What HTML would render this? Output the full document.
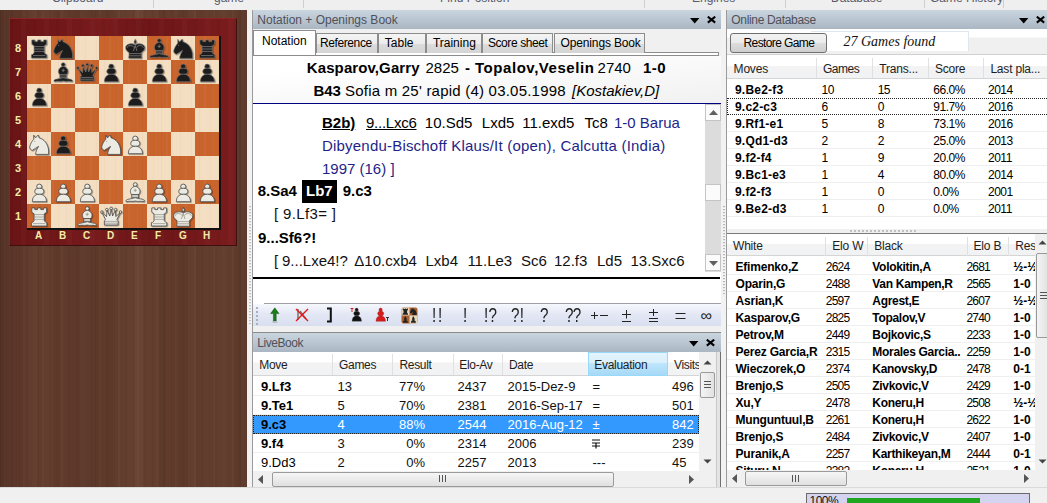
<!DOCTYPE html><html><head><meta charset='utf-8'><style>
*{margin:0;padding:0;box-sizing:border-box}
html,body{width:1047px;height:503px;overflow:hidden;background:#f0f0f0;font-family:"Liberation Sans", sans-serif;}
.a{position:absolute}
.t{position:absolute;white-space:pre;line-height:1}
.tb{position:absolute;background:linear-gradient(#c9d5df,#bac6d1 50%,#aab7c3);}
.ttl{position:absolute;font-size:12px;color:#4d4d55;white-space:pre;line-height:1}
</style></head><body>
<div class='a' style='left:0;top:0;width:1047px;height:10px;background:#efefef'></div>
<div class='a' style='left:153px;top:0;width:1px;height:8px;background:#cfcfcf'></div>
<div class='a' style='left:303px;top:0;width:1px;height:8px;background:#cfcfcf'></div>
<div class='a' style='left:644px;top:0;width:1px;height:8px;background:#cfcfcf'></div>
<div class='a' style='left:785px;top:0;width:1px;height:8px;background:#cfcfcf'></div>
<div class='a' style='left:924px;top:0;width:1px;height:8px;background:#cfcfcf'></div>
<div class='a' style='left:1003px;top:0;width:1px;height:8px;background:#cfcfcf'></div>
<div class='t' style='left:52px;top:-8.2px;font-size:12px;color:#5a5a6a'>Clipboard</div>
<div class='t' style='left:214px;top:-8.2px;font-size:12px;color:#5a5a6a'>game</div>
<div class='t' style='left:440px;top:-8.2px;font-size:12px;color:#5a5a6a'>Find Position</div>
<div class='t' style='left:692px;top:-8.2px;font-size:12px;color:#5a5a6a'>Engines</div>
<div class='t' style='left:831px;top:-8.2px;font-size:12px;color:#5a5a6a'>Database</div>
<div class='t' style='left:930px;top:-8.2px;font-size:12px;color:#5a5a6a'>Game History</div>
<div class='a' style='left:0;top:10px;width:247px;height:477px;background:repeating-linear-gradient(90deg,rgba(0,0,0,.05) 0 1px,transparent 1px 4px,rgba(255,255,255,.025) 4px 6px,transparent 6px 11px,rgba(0,0,0,.04) 11px 13px,transparent 13px 19px),repeating-linear-gradient(90deg,rgba(0,0,0,.045) 0 7px,transparent 7px 29px,rgba(255,255,255,.025) 29px 37px,transparent 37px 53px),linear-gradient(90deg,#583427,#643d2e 20%,#5b3729 35%,#66402f 55%,#5e392a 75%,#65402f 90%,#5a3628);'></div>
<div class='a' style='left:9px;top:18px;width:228px;height:228px;background:repeating-linear-gradient(90deg,rgba(0,0,0,.04) 0 3px,transparent 3px 11px,rgba(255,255,255,.02) 11px 16px,transparent 16px 23px),linear-gradient(90deg,#6a1416,#781b1d 40%,#6e1618 60%,#7a1c1e);border:1px solid #8c2424;border-right-color:#3e1010;border-bottom-color:#3e1010'></div>
<svg class='a' style='left:27px;top:36px' width='194' height='194' viewBox='0 0 194 194'><defs>
<symbol id='P' viewBox='0 0 24 24'><ellipse cx='12.2' cy='6.5' rx='2.5' ry='2.4'/><ellipse cx='12.3' cy='11.3' rx='4.5' ry='3.1'/><path d='M5.4,21.7 C5.2,17.2 8,14.2 12.3,14.2 C16.6,14.2 19.5,17.2 19.5,21.7 Z'/></symbol>
<symbol id='R' viewBox='0 0 24 24'><path d='M4.8,3.9 H7.8 V5.6 H10.6 V3.9 H13.8 V5.6 H16.6 V3.9 H19.6 V8.2 L17.3,9.8 V16.8 L19,18.6 H19.8 V22 H4.4 V18.6 H5.4 L7.1,16.8 V9.8 L4.8,8.2 Z'/></symbol>
<symbol id='N' viewBox='0 0 24 24'><path d='M6.7,3.2 L8.5,5.9 L11.2,3 L12.2,5.9 C16.8,7 20.8,11.5 21.6,18 L21.6,22.4 H8.6 C8.6,20 9.8,17.4 11.6,14.4 C9.6,15.5 7.5,17 5.4,18.3 C4,18.1 2.5,16.6 2.7,14.8 C3.3,12 5,9 6.8,7.2 Z'/></symbol>
<symbol id='B' viewBox='0 0 24 24'><circle cx='12.2' cy='4.6' r='1.9'/><path d='M12.2,6.2 C7.6,7.4 6.6,11 8,13.6 L9,14.6 H15.4 L16.4,13.6 C17.8,11 16.8,7.4 12.2,6.2 Z'/><rect x='8.8' y='14.4' width='6.8' height='3.4'/><path d='M2.8,20.6 C4.8,18.4 9,19.2 12.2,17.6 C15.4,19.2 19.6,18.4 21.6,20.6 L21,21.8 C18.2,20.6 15,22 12.2,21 C9.4,22 6.2,20.6 3.4,21.8 Z'/></symbol>
<symbol id='Q' viewBox='0 0 24 24'><path d='M3,8.4 L6.6,15.6 L5.4,16.8 V21 H19 V16.8 L17.8,15.6 L21.4,8.4 L16.8,12.6 L16.4,6.4 L13.6,12 L12.2,5.4 L10.8,12 L8,6.4 L7.6,12.6 Z'/><circle cx='2.9' cy='8' r='1.25'/><circle cx='7.8' cy='5.6' r='1.25'/><circle cx='12.2' cy='4.4' r='1.25'/><circle cx='16.6' cy='5.6' r='1.25'/><circle cx='21.5' cy='8' r='1.25'/></symbol>
<symbol id='K' viewBox='0 0 24 24'><path d='M11.4,7.6 L11.2,5.6 L12.2,3.2 L13.2,5.6 L13,7.6 Z'/><path d='M12.2,9.2 C10.8,7 2.6,7 2.6,11.8 C2.6,14.2 5,15.8 6,16.6 V19.6 L5.8,20.2 V22.2 H18.6 V20.2 L18.4,19.6 V16.6 C19.4,15.8 21.8,14.2 21.8,11.8 C21.8,7 13.6,7 12.2,9.2 Z'/></symbol>
</defs><rect x='0' y='0' width='24' height='24' fill='#f4dec2'/><rect x='24' y='0' width='24' height='24' fill='#c8642c'/><rect x='48' y='0' width='24' height='24' fill='#f4dec2'/><rect x='72' y='0' width='24' height='24' fill='#c8642c'/><rect x='96' y='0' width='24' height='24' fill='#f4dec2'/><rect x='120' y='0' width='24' height='24' fill='#c8642c'/><rect x='144' y='0' width='24' height='24' fill='#f4dec2'/><rect x='168' y='0' width='24' height='24' fill='#c8642c'/><rect x='0' y='24' width='24' height='24' fill='#c8642c'/><rect x='24' y='24' width='24' height='24' fill='#f4dec2'/><rect x='48' y='24' width='24' height='24' fill='#c8642c'/><rect x='72' y='24' width='24' height='24' fill='#f4dec2'/><rect x='96' y='24' width='24' height='24' fill='#c8642c'/><rect x='120' y='24' width='24' height='24' fill='#f4dec2'/><rect x='144' y='24' width='24' height='24' fill='#c8642c'/><rect x='168' y='24' width='24' height='24' fill='#f4dec2'/><rect x='0' y='48' width='24' height='24' fill='#f4dec2'/><rect x='24' y='48' width='24' height='24' fill='#c8642c'/><rect x='48' y='48' width='24' height='24' fill='#f4dec2'/><rect x='72' y='48' width='24' height='24' fill='#c8642c'/><rect x='96' y='48' width='24' height='24' fill='#f4dec2'/><rect x='120' y='48' width='24' height='24' fill='#c8642c'/><rect x='144' y='48' width='24' height='24' fill='#f4dec2'/><rect x='168' y='48' width='24' height='24' fill='#c8642c'/><rect x='0' y='72' width='24' height='24' fill='#c8642c'/><rect x='24' y='72' width='24' height='24' fill='#f4dec2'/><rect x='48' y='72' width='24' height='24' fill='#c8642c'/><rect x='72' y='72' width='24' height='24' fill='#f4dec2'/><rect x='96' y='72' width='24' height='24' fill='#c8642c'/><rect x='120' y='72' width='24' height='24' fill='#f4dec2'/><rect x='144' y='72' width='24' height='24' fill='#c8642c'/><rect x='168' y='72' width='24' height='24' fill='#f4dec2'/><rect x='0' y='96' width='24' height='24' fill='#f4dec2'/><rect x='24' y='96' width='24' height='24' fill='#c8642c'/><rect x='48' y='96' width='24' height='24' fill='#f4dec2'/><rect x='72' y='96' width='24' height='24' fill='#c8642c'/><rect x='96' y='96' width='24' height='24' fill='#f4dec2'/><rect x='120' y='96' width='24' height='24' fill='#c8642c'/><rect x='144' y='96' width='24' height='24' fill='#f4dec2'/><rect x='168' y='96' width='24' height='24' fill='#c8642c'/><rect x='0' y='120' width='24' height='24' fill='#c8642c'/><rect x='24' y='120' width='24' height='24' fill='#f4dec2'/><rect x='48' y='120' width='24' height='24' fill='#c8642c'/><rect x='72' y='120' width='24' height='24' fill='#f4dec2'/><rect x='96' y='120' width='24' height='24' fill='#c8642c'/><rect x='120' y='120' width='24' height='24' fill='#f4dec2'/><rect x='144' y='120' width='24' height='24' fill='#c8642c'/><rect x='168' y='120' width='24' height='24' fill='#f4dec2'/><rect x='0' y='144' width='24' height='24' fill='#f4dec2'/><rect x='24' y='144' width='24' height='24' fill='#c8642c'/><rect x='48' y='144' width='24' height='24' fill='#f4dec2'/><rect x='72' y='144' width='24' height='24' fill='#c8642c'/><rect x='96' y='144' width='24' height='24' fill='#f4dec2'/><rect x='120' y='144' width='24' height='24' fill='#c8642c'/><rect x='144' y='144' width='24' height='24' fill='#f4dec2'/><rect x='168' y='144' width='24' height='24' fill='#c8642c'/><rect x='0' y='168' width='24' height='24' fill='#c8642c'/><rect x='24' y='168' width='24' height='24' fill='#f4dec2'/><rect x='48' y='168' width='24' height='24' fill='#c8642c'/><rect x='72' y='168' width='24' height='24' fill='#f4dec2'/><rect x='96' y='168' width='24' height='24' fill='#c8642c'/><rect x='120' y='168' width='24' height='24' fill='#f4dec2'/><rect x='144' y='168' width='24' height='24' fill='#c8642c'/><rect x='168' y='168' width='24' height='24' fill='#f4dec2'/><defs><pattern id='gr' width='19' height='24' patternUnits='userSpaceOnUse'><rect x='1' width='1' height='24' fill='rgba(120,50,20,.035)'/><rect x='6' width='2' height='24' fill='rgba(255,255,255,.03)'/><rect x='12' width='1' height='24' fill='rgba(120,50,20,.03)'/><rect x='15' width='1' height='24' fill='rgba(255,255,255,.02)'/></pattern><filter id='sh' x='-20%' y='-20%' width='150%' height='150%'><feDropShadow dx='0.7' dy='0.7' stdDeviation='0.5' flood-color='#000' flood-opacity='0.45'/></filter></defs><rect width='192' height='192' fill='url(#gr)'/><path d='M0,193 H193 V0' fill='none' stroke='#111' stroke-width='2'/><use href='#R' x='0' y='0' width='24' height='24' fill='#1e1e1e' stroke='#7a7a7a' stroke-width='0.6' filter='url(#sh)'/><path transform='translate(0,0)' d='M7.4,10.6 H17 M7.4,13 H17 M7.4,15.4 H17 M6,19.6 H18.4' stroke='#8a8a8a' stroke-width='0.7' fill='none'/><use href='#N' x='24' y='0' width='24' height='24' fill='#1e1e1e' stroke='#7a7a7a' stroke-width='0.6' filter='url(#sh)'/><path transform='translate(24,0)' d='M7.2,9.4 L8.2,9.4' stroke='#8a8a8a' stroke-width='0.7' fill='none'/><use href='#K' x='96' y='0' width='24' height='24' fill='#1e1e1e' stroke='#7a7a7a' stroke-width='0.6' filter='url(#sh)'/><path transform='translate(96,0)' d='M6.4,17.6 H18 M6.2,19.8 H18.2 M12.2,9.6 L10.4,15 M12.2,9.6 L14,15 M4.2,11.8 C4.2,9 9.6,8.6 11.2,11.6 M20.2,11.8 C20.2,9 14.8,8.6 13.2,11.6' stroke='#8a8a8a' stroke-width='0.7' fill='none'/><use href='#B' x='120' y='0' width='24' height='24' fill='#1e1e1e' stroke='#7a7a7a' stroke-width='0.6' filter='url(#sh)'/><path transform='translate(120,0)' d='M9,16 H15.4 M12.2,8.6 V12 M10.6,10.3 H13.8' stroke='#8a8a8a' stroke-width='0.7' fill='none'/><use href='#N' x='144' y='0' width='24' height='24' fill='#1e1e1e' stroke='#7a7a7a' stroke-width='0.6' filter='url(#sh)'/><path transform='translate(144,0)' d='M7.2,9.4 L8.2,9.4' stroke='#8a8a8a' stroke-width='0.7' fill='none'/><use href='#R' x='168' y='0' width='24' height='24' fill='#1e1e1e' stroke='#7a7a7a' stroke-width='0.6' filter='url(#sh)'/><path transform='translate(168,0)' d='M7.4,10.6 H17 M7.4,13 H17 M7.4,15.4 H17 M6,19.6 H18.4' stroke='#8a8a8a' stroke-width='0.7' fill='none'/><use href='#B' x='24' y='24' width='24' height='24' fill='#1e1e1e' stroke='#7a7a7a' stroke-width='0.6' filter='url(#sh)'/><path transform='translate(24,24)' d='M9,16 H15.4 M12.2,8.6 V12 M10.6,10.3 H13.8' stroke='#8a8a8a' stroke-width='0.7' fill='none'/><use href='#Q' x='48' y='24' width='24' height='24' fill='#1e1e1e' stroke='#7a7a7a' stroke-width='0.6' filter='url(#sh)'/><path transform='translate(48,24)' d='M6,17.4 H18.4 M6,19.2 H18.4' stroke='#8a8a8a' stroke-width='0.7' fill='none'/><use href='#P' x='72' y='24' width='24' height='24' fill='#1e1e1e' stroke='#7a7a7a' stroke-width='0.6' filter='url(#sh)'/><use href='#P' x='120' y='24' width='24' height='24' fill='#1e1e1e' stroke='#7a7a7a' stroke-width='0.6' filter='url(#sh)'/><use href='#P' x='144' y='24' width='24' height='24' fill='#1e1e1e' stroke='#7a7a7a' stroke-width='0.6' filter='url(#sh)'/><use href='#P' x='168' y='24' width='24' height='24' fill='#1e1e1e' stroke='#7a7a7a' stroke-width='0.6' filter='url(#sh)'/><use href='#P' x='0' y='48' width='24' height='24' fill='#1e1e1e' stroke='#7a7a7a' stroke-width='0.6' filter='url(#sh)'/><use href='#P' x='96' y='48' width='24' height='24' fill='#1e1e1e' stroke='#7a7a7a' stroke-width='0.6' filter='url(#sh)'/><use href='#N' x='0' y='96' width='24' height='24' fill='#ecebe3' stroke='#4a4a4a' stroke-width='0.8' filter='url(#sh)'/><path transform='translate(0,96)' d='M7.2,9.4 L8.2,9.4' stroke='#8c8c84' stroke-width='0.7' fill='none'/><use href='#P' x='24' y='96' width='24' height='24' fill='#1e1e1e' stroke='#7a7a7a' stroke-width='0.6' filter='url(#sh)'/><use href='#N' x='72' y='96' width='24' height='24' fill='#ecebe3' stroke='#4a4a4a' stroke-width='0.8' filter='url(#sh)'/><path transform='translate(72,96)' d='M7.2,9.4 L8.2,9.4' stroke='#8c8c84' stroke-width='0.7' fill='none'/><use href='#P' x='96' y='96' width='24' height='24' fill='#ecebe3' stroke='#4a4a4a' stroke-width='0.8' filter='url(#sh)'/><use href='#P' x='0' y='144' width='24' height='24' fill='#ecebe3' stroke='#4a4a4a' stroke-width='0.8' filter='url(#sh)'/><use href='#P' x='24' y='144' width='24' height='24' fill='#ecebe3' stroke='#4a4a4a' stroke-width='0.8' filter='url(#sh)'/><use href='#P' x='48' y='144' width='24' height='24' fill='#ecebe3' stroke='#4a4a4a' stroke-width='0.8' filter='url(#sh)'/><use href='#B' x='96' y='144' width='24' height='24' fill='#ecebe3' stroke='#4a4a4a' stroke-width='0.8' filter='url(#sh)'/><path transform='translate(96,144)' d='M9,16 H15.4 M12.2,8.6 V12 M10.6,10.3 H13.8' stroke='#8c8c84' stroke-width='0.7' fill='none'/><use href='#P' x='120' y='144' width='24' height='24' fill='#ecebe3' stroke='#4a4a4a' stroke-width='0.8' filter='url(#sh)'/><use href='#P' x='144' y='144' width='24' height='24' fill='#ecebe3' stroke='#4a4a4a' stroke-width='0.8' filter='url(#sh)'/><use href='#P' x='168' y='144' width='24' height='24' fill='#ecebe3' stroke='#4a4a4a' stroke-width='0.8' filter='url(#sh)'/><use href='#R' x='0' y='168' width='24' height='24' fill='#ecebe3' stroke='#4a4a4a' stroke-width='0.8' filter='url(#sh)'/><path transform='translate(0,168)' d='M7.4,10.6 H17 M7.4,13 H17 M7.4,15.4 H17 M6,19.6 H18.4' stroke='#8c8c84' stroke-width='0.7' fill='none'/><use href='#B' x='48' y='168' width='24' height='24' fill='#ecebe3' stroke='#4a4a4a' stroke-width='0.8' filter='url(#sh)'/><path transform='translate(48,168)' d='M9,16 H15.4 M12.2,8.6 V12 M10.6,10.3 H13.8' stroke='#8c8c84' stroke-width='0.7' fill='none'/><use href='#Q' x='72' y='168' width='24' height='24' fill='#ecebe3' stroke='#4a4a4a' stroke-width='0.8' filter='url(#sh)'/><path transform='translate(72,168)' d='M6,17.4 H18.4 M6,19.2 H18.4' stroke='#8c8c84' stroke-width='0.7' fill='none'/><use href='#R' x='120' y='168' width='24' height='24' fill='#ecebe3' stroke='#4a4a4a' stroke-width='0.8' filter='url(#sh)'/><path transform='translate(120,168)' d='M7.4,10.6 H17 M7.4,13 H17 M7.4,15.4 H17 M6,19.6 H18.4' stroke='#8c8c84' stroke-width='0.7' fill='none'/><use href='#K' x='144' y='168' width='24' height='24' fill='#ecebe3' stroke='#4a4a4a' stroke-width='0.8' filter='url(#sh)'/><path transform='translate(144,168)' d='M6.4,17.6 H18 M6.2,19.8 H18.2 M12.2,9.6 L10.4,15 M12.2,9.6 L14,15 M4.2,11.8 C4.2,9 9.6,8.6 11.2,11.6 M20.2,11.8 C20.2,9 14.8,8.6 13.2,11.6' stroke='#8c8c84' stroke-width='0.7' fill='none'/></svg>
<div class='t' style='left:15px;top:43px;font-size:11px;font-weight:bold;color:#f4eca8'>8</div>
<div class='t' style='left:15px;top:67px;font-size:11px;font-weight:bold;color:#f4eca8'>7</div>
<div class='t' style='left:15px;top:91px;font-size:11px;font-weight:bold;color:#f4eca8'>6</div>
<div class='t' style='left:15px;top:115px;font-size:11px;font-weight:bold;color:#f4eca8'>5</div>
<div class='t' style='left:15px;top:139px;font-size:11px;font-weight:bold;color:#f4eca8'>4</div>
<div class='t' style='left:15px;top:163px;font-size:11px;font-weight:bold;color:#f4eca8'>3</div>
<div class='t' style='left:15px;top:187px;font-size:11px;font-weight:bold;color:#f4eca8'>2</div>
<div class='t' style='left:15px;top:211px;font-size:11px;font-weight:bold;color:#f4eca8'>1</div>
<div class='t' style='left:35px;top:231px;font-size:10px;font-weight:bold;color:#f4eca8'>A</div>
<div class='t' style='left:59px;top:231px;font-size:10px;font-weight:bold;color:#f4eca8'>B</div>
<div class='t' style='left:83px;top:231px;font-size:10px;font-weight:bold;color:#f4eca8'>C</div>
<div class='t' style='left:107px;top:231px;font-size:10px;font-weight:bold;color:#f4eca8'>D</div>
<div class='t' style='left:131px;top:231px;font-size:10px;font-weight:bold;color:#f4eca8'>E</div>
<div class='t' style='left:155px;top:231px;font-size:10px;font-weight:bold;color:#f4eca8'>F</div>
<div class='t' style='left:179px;top:231px;font-size:10px;font-weight:bold;color:#f4eca8'>G</div>
<div class='t' style='left:203px;top:231px;font-size:10px;font-weight:bold;color:#f4eca8'>H</div>
<div class='a' style='left:247px;top:10px;width:5px;height:477px;background:#f2f2f2'></div>
<div class='a' style='left:252px;top:10px;width:1px;height:477px;background:#9a9a9a'></div>
<div class='tb' style='left:253px;top:10px;width:469px;height:19px'></div>
<div class='t' style='left:257.3px;top:13.64px;font-size:12px;color:#4f5059;font-weight:normal;letter-spacing:0px'>Notation + Openings Book</div>
<svg class='a' style='left:689.7px;top:17.6px' width='10' height='6'><path d='M0,0 H9.4 L4.7,5.4 Z' fill='#000'/></svg>
<svg class='a' style='left:706.5px;top:15.8px' width='9' height='8'><path d='M0.8,0.6 L8.2,6.6 M8.2,0.6 L0.8,6.6' stroke='#000' stroke-width='2'/></svg>
<div class='a' style='left:253px;top:29px;width:469px;height:27px;background:#f0f0f0'></div>
<div class='a' style='left:253px;top:52px;width:466px;height:4px;background:#fff;border:1px solid #8c8c8c'></div>
<div class='a' style='left:316px;top:33px;width:62px;height:20px;border:1px solid #8c8c8c;border-bottom:none;background:linear-gradient(#f4f4f4,#ececec 50%,#dcdcdc 51%,#d4d4d4)'></div>
<div class='t' style='left:320px;top:36.84px;font-size:12px;color:#000;font-weight:normal;letter-spacing:-0.4px'>Reference</div>
<div class='a' style='left:378px;top:33px;width:48px;height:20px;border:1px solid #8c8c8c;border-bottom:none;background:linear-gradient(#f4f4f4,#ececec 50%,#dcdcdc 51%,#d4d4d4)'></div>
<div class='t' style='left:384.8px;top:36.84px;font-size:12px;color:#000;font-weight:normal;letter-spacing:0px'>Table</div>
<div class='a' style='left:426px;top:33px;width:56px;height:20px;border:1px solid #8c8c8c;border-bottom:none;background:linear-gradient(#f4f4f4,#ececec 50%,#dcdcdc 51%,#d4d4d4)'></div>
<div class='t' style='left:432.9px;top:36.84px;font-size:12px;color:#000;font-weight:normal;letter-spacing:0px'>Training</div>
<div class='a' style='left:482px;top:33px;width:71px;height:20px;border:1px solid #8c8c8c;border-bottom:none;background:linear-gradient(#f4f4f4,#ececec 50%,#dcdcdc 51%,#d4d4d4)'></div>
<div class='t' style='left:487.9px;top:36.84px;font-size:12px;color:#000;font-weight:normal;letter-spacing:-0.4px'>Score sheet</div>
<div class='a' style='left:554px;top:33px;width:91px;height:20px;border:1px solid #8c8c8c;border-bottom:none;background:linear-gradient(#f4f4f4,#ececec 50%,#dcdcdc 51%,#d4d4d4)'></div>
<div class='t' style='left:560.6px;top:36.84px;font-size:12px;color:#000;font-weight:normal;letter-spacing:-0.15px'>Openings Book</div>
<div class='a' style='left:253px;top:30px;width:63px;height:26px;border:1px solid #8c8c8c;border-bottom:none;background:#fff'></div>
<div class='t' style='left:262px;top:34.84px;font-size:12px;color:#000;font-weight:normal;'>Notation</div>
<div class='a' style='left:253px;top:56px;width:468px;height:276px;background:#fff'></div>
<div class='a' style='left:253px;top:56px;width:468px;height:47px;background:linear-gradient(175deg,#fff 20%,#f1f1f1)'></div>
<div class='a' style='left:253px;top:55px;width:466px;height:1px;background:#8c8c8c'></div>
<div class='t' style='left:306.8px;top:60.00px;font-size:15px;color:#000;font-weight:bold;letter-spacing:0.1px'>Kasparov,Garry</div>
<div class='t' style='left:425.5px;top:60.00px;font-size:15px;color:#000;font-weight:normal;'>2825</div>
<div class='t' style='left:465px;top:60.00px;font-size:15px;color:#000;font-weight:bold;'>-</div>
<div class='t' style='left:475px;top:60.00px;font-size:15px;color:#000;font-weight:bold;letter-spacing:0.55px'>Topalov,Veselin</div>
<div class='t' style='left:597.6px;top:60.00px;font-size:15px;color:#000;font-weight:normal;'>2740</div>
<div class='t' style='left:643px;top:60.00px;font-size:15px;color:#000;font-weight:bold;letter-spacing:0.5px'>1-0</div>
<div class='t' style='left:313.4px;top:82.70px;font-size:15px;color:#000;font-weight:bold;'>B43</div>
<div class='t' style='left:345px;top:82.70px;font-size:15px;color:#000;font-weight:normal;letter-spacing:0.22px'>Sofia m 25' rapid (4) 03.05.1998</div>
<div class='t' style='left:572px;top:82.70px;font-size:15px;color:#000;font-weight:normal;font-style:italic'>[Kostakiev,D]</div>
<div class='a' style='left:253px;top:103px;width:468px;height:1px;background:#000080'></div>
<div class='t' style='left:322px;top:115.00px;font-size:15px;color:#000;font-weight:bold;'><u>B2b)</u></div>
<div class='t' style='left:366px;top:115.00px;font-size:15px;color:#000;font-weight:normal;letter-spacing:-0.25px'><u>9...Lxc6</u></div>
<div class='t' style='left:424.8px;top:115.00px;font-size:15px;color:#000;font-weight:normal;'>10.Sd5</div>
<div class='t' style='left:481.8px;top:115.00px;font-size:15px;color:#000;font-weight:normal;'>Lxd5</div>
<div class='t' style='left:522.2px;top:115.00px;font-size:15px;color:#000;font-weight:normal;'>11.exd5</div>
<div class='t' style='left:584.4px;top:115.00px;font-size:15px;color:#000;font-weight:normal;'>Tc8</div>
<div class='t' style='left:614px;top:115.00px;font-size:15px;color:#1f1f88;font-weight:normal;'>1-0 Barua</div>
<div class='t' style='left:322px;top:137.60px;font-size:15px;color:#1f1f88;font-weight:normal;letter-spacing:0.2px'>Dibyendu-Bischoff Klaus/It (open), Calcutta (India)</div>
<div class='t' style='left:322px;top:161.30px;font-size:15px;color:#1f1f88;font-weight:normal;'>1997 (16) ]</div>
<div class='t' style='left:257.7px;top:183.00px;font-size:15px;color:#000;font-weight:bold;'>8.Sa4</div>
<div class='a' style='left:302px;top:180px;width:35px;height:23px;background:#000'></div>
<div class='t' style='left:306px;top:183.00px;font-size:15px;color:#fff;font-weight:bold;'>Lb7</div>
<div class='t' style='left:342.7px;top:183.00px;font-size:15px;color:#000;font-weight:bold;'>9.c3</div>
<div class='t' style='left:274px;top:205.50px;font-size:15px;color:#111;font-weight:normal;letter-spacing:0.35px'>[ 9.Lf3= ]</div>
<div class='t' style='left:258px;top:229.60px;font-size:15px;color:#000;font-weight:bold;'>9...Sf6?!</div>
<div class='t' style='left:274px;top:252.80px;font-size:15px;color:#111;font-weight:normal;'>[</div>
<div class='t' style='left:282px;top:252.80px;font-size:15px;color:#111;font-weight:normal;'>9...Lxe4!?</div>
<div class='t' style='left:354.3px;top:252.80px;font-size:15px;color:#111;font-weight:normal;'>Δ10.cxb4</div>
<div class='t' style='left:425.5px;top:252.80px;font-size:15px;color:#111;font-weight:normal;'>Lxb4</div>
<div class='t' style='left:467.4px;top:252.80px;font-size:15px;color:#111;font-weight:normal;'>11.Le3</div>
<div class='t' style='left:521px;top:252.80px;font-size:15px;color:#111;font-weight:normal;'>Sc6</div>
<div class='t' style='left:554px;top:252.80px;font-size:15px;color:#111;font-weight:normal;'>12.f3</div>
<div class='t' style='left:597px;top:252.80px;font-size:15px;color:#111;font-weight:normal;'>Ld5</div>
<div class='t' style='left:630.5px;top:252.80px;font-size:15px;color:#111;font-weight:normal;'>13.Sxc6</div>
<div class='a' style='left:705px;top:104px;width:16px;height:168px;background:#dcdcdc'></div>
<div class='a' style='left:705px;top:104px;width:16px;height:17px;background:#fbfbfb;border:1px solid #c4c4c4'></div>
<svg class='a' style='left:709px;top:110px' width='9' height='5'><path d='M0,5 L4.5,0 L9,5 Z' fill='#606060'/></svg>
<div class='a' style='left:705px;top:184px;width:16px;height:17px;background:#fbfbfb;border:1px solid #c4c4c4'></div>
<div class='a' style='left:705px;top:254px;width:16px;height:17px;background:#fbfbfb;border:1px solid #c4c4c4'></div>
<svg class='a' style='left:709px;top:261px' width='9' height='5'><path d='M0,0 L4.5,5 L9,0 Z' fill='#606060'/></svg>
<div class='a' style='left:253px;top:277px;width:467px;height:2px;background:#000'></div>
<div class='a' style='left:264px;top:303px;width:457px;height:1px;background:#a0a0a8'></div>
<div class='a' style='left:253px;top:304px;width:468px;height:23px;background:linear-gradient(#f6f8fd,#e4e8f5 45%,#d9dff0);border-bottom:1px solid #b8bfd2'></div>
<div class='a' style='left:253px;top:326px;width:468px;height:7px;background:#f0f0f0'></div>
<div class='a' style='left:253px;top:332px;width:468px;height:1px;background:#8a8a8a'></div>
<div class='a' style='left:256px;top:307px;width:2px;height:2px;background:#a8b0c4'></div>
<div class='a' style='left:256px;top:311px;width:2px;height:2px;background:#a8b0c4'></div>
<div class='a' style='left:256px;top:315px;width:2px;height:2px;background:#a8b0c4'></div>
<div class='a' style='left:256px;top:319px;width:2px;height:2px;background:#a8b0c4'></div>
<div class='a' style='left:256px;top:323px;width:2px;height:2px;background:#a8b0c4'></div>
<svg class='a' style='left:268px;top:306px' width='14' height='18'><path d='M6.8,1.8 L11,7.6 H8.2 V15 H5.4 V7.6 H2.6 Z' fill='#1a7a1a' stroke='#0e5a0e' stroke-width='0.5'/><ellipse cx='6.8' cy='16' rx='3' ry='0.8' fill='#b0b0b8'/></svg>
<svg class='a' style='left:294px;top:306px' width='16' height='18'><path d='M4,3 L4,14 M6,5 L12,13' stroke='#7a7a7a' stroke-width='1.6'/><path d='M2,3 L14,15 M14,3 L2,15' stroke='#e01818' stroke-width='1.4'/></svg>
<svg class='a' style='left:325px;top:306px' width='9' height='18'><path d='M2,2.5 H5.8 V15.5 H2' fill='none' stroke='#111' stroke-width='2'/></svg>
<svg class='a' style='left:349px;top:306px' width='14' height='18'><svg x='-0.5' y='-1' width='16' height='18' viewBox='0 0 24 24' preserveAspectRatio='none'><use href='#P' fill='#111' stroke='#555' stroke-width='0.5'/></svg><path d='M1.5,2.5 H4.5 M3,2.5 V6' stroke='#d02020' stroke-width='1'/></svg>
<svg class='a' style='left:375px;top:306px' width='16' height='18'><svg x='-2.5' y='-1' width='16' height='18' viewBox='0 0 24 24' preserveAspectRatio='none'><use href='#P' fill='#d81c1c' stroke='#901010' stroke-width='0.5'/></svg><path d='M11,11.5 H14 M12.5,11.5 V15' stroke='#333' stroke-width='1'/></svg>
<svg class='a' style='left:401px;top:307px' width='17' height='17'><rect x='0.5' y='0.5' width='16' height='16' rx='2' fill='#a86030'/><rect x='0.5' y='0.5' width='8' height='8' fill='#e8d8c0'/><rect x='8.5' y='8.5' width='8' height='8' fill='#e8d8c0'/><use href='#R' x='0' y='0' width='8.5' height='8.5' fill='#222'/><use href='#N' x='8' y='0' width='8.5' height='8.5' fill='#222'/><use href='#P' x='0' y='8' width='8.5' height='8.5' fill='#222'/><use href='#P' x='8' y='8' width='8.5' height='8.5' fill='#222'/></svg>
<div class='t' style='left:432px;top:309.46px;font-size:16px;color:#222;font-weight:normal;letter-spacing:1.8px;transform:scale(0.95,1.3);transform-origin:0 13.5px;-webkit-text-stroke:0'>!!</div>
<div class='t' style='left:462.5px;top:309.46px;font-size:16px;color:#222;font-weight:normal;letter-spacing:0px;transform:scale(0.95,1.3);transform-origin:0 13.5px;-webkit-text-stroke:0'>!</div>
<div class='t' style='left:483.5px;top:309.46px;font-size:16px;color:#222;font-weight:normal;letter-spacing:0.3px;transform:scale(0.95,1.3);transform-origin:0 13.5px;-webkit-text-stroke:0'>!?</div>
<div class='t' style='left:510.5px;top:309.46px;font-size:16px;color:#222;font-weight:normal;letter-spacing:0.3px;transform:scale(0.95,1.3);transform-origin:0 13.5px;-webkit-text-stroke:0'>?!</div>
<div class='t' style='left:540px;top:309.46px;font-size:16px;color:#222;font-weight:normal;letter-spacing:0px;transform:scale(0.95,1.3);transform-origin:0 13.5px;-webkit-text-stroke:0'>?</div>
<div class='t' style='left:565px;top:309.46px;font-size:16px;color:#222;font-weight:normal;letter-spacing:-0.8px;transform:scale(0.95,1.3);transform-origin:0 13.5px;-webkit-text-stroke:0'>??</div>
<svg class='a' style='left:590px;top:308px' width='130' height='16'><path d='M1,7.5 H8 M4.5,4 V11 M10,7.5 H18' stroke='#222' stroke-width='1'/><path d='M32,6.5 H41 M36.5,2 V10.5 M32,13.5 H41' stroke='#222' stroke-width='1'/><path d='M59,4.5 H68 M63.5,1 V8 M59,10.5 H68 M59,13.5 H68' stroke='#222' stroke-width='1'/><path d='M85.5,5.5 H95.5 M85.5,10.5 H95.5' stroke='#222' stroke-width='1'/></svg>
<div class='t' style='left:700.5px;top:308.46px;font-size:16px;color:#222;font-weight:normal;'>∞</div>
<div class='a' style='left:721px;top:10px;width:5px;height:477px;background:#f2f2f2'></div>
<div class='a' style='left:722.5px;top:206px;width:2px;height:88px;background:repeating-linear-gradient(#b8b8b8 0 1px,#e8e8e8 1px 2px,#f8f8f8 2px 3px)'></div>
<div class='a' style='left:248.5px;top:206px;width:2px;height:120px;background:repeating-linear-gradient(#c0c0c0 0 1px,#e8e8e8 1px 2px,#f8f8f8 2px 3px)'></div>
<div class='tb' style='left:253px;top:333px;width:468px;height:19px'></div>
<div class='t' style='left:257.3px;top:336.64px;font-size:12px;color:#4f5059;font-weight:normal;letter-spacing:-0.45px'>LiveBook</div>
<svg class='a' style='left:688.7px;top:340.6px' width='10' height='6'><path d='M0,0 H9.4 L4.7,5.4 Z' fill='#000'/></svg>
<svg class='a' style='left:705.5px;top:338.8px' width='9' height='8'><path d='M0.8,0.6 L8.2,6.6 M8.2,0.6 L0.8,6.6' stroke='#000' stroke-width='2'/></svg>
<div class='a' style='left:253px;top:352px;width:468px;height:135px;background:#fff'></div>
<div class='a' style='left:253px;top:352px;width:446px;height:24px;background:linear-gradient(#fff 0,#fff 45%,#f3f3f4 46%,#f1f2f3);border-bottom:1px solid #d5d5d5'></div>
<div class='a' style='left:588px;top:352px;width:80px;height:24px;background:linear-gradient(#e3f4fc 0,#d9f0fc 45%,#bee6fd 46%,#a7d9f5);border:1px solid #96d9f9'></div>
<div class='a' style='left:332px;top:354px;width:1px;height:21px;background:#e0e0e0'></div>
<div class='a' style='left:392px;top:354px;width:1px;height:21px;background:#e0e0e0'></div>
<div class='a' style='left:452.5px;top:354px;width:1px;height:21px;background:#e0e0e0'></div>
<div class='a' style='left:502px;top:354px;width:1px;height:21px;background:#e0e0e0'></div>
<div class='t' style='left:259.3px;top:359.24px;font-size:12px;color:#1e1e1e;font-weight:normal;letter-spacing:-0.3px'>Move</div>
<div class='t' style='left:339px;top:359.24px;font-size:12px;color:#1e1e1e;font-weight:normal;letter-spacing:-0.3px'>Games</div>
<div class='t' style='left:399.4px;top:359.24px;font-size:12px;color:#1e1e1e;font-weight:normal;letter-spacing:-0.3px'>Result</div>
<div class='t' style='left:459.2px;top:359.24px;font-size:12px;color:#1e1e1e;font-weight:normal;letter-spacing:-0.3px'>Elo-Av</div>
<div class='t' style='left:509px;top:359.24px;font-size:12px;color:#1e1e1e;font-weight:normal;letter-spacing:-0.3px'>Date</div>
<div class='t' style='left:594.3px;top:359.24px;font-size:12px;color:#1e1e1e;font-weight:normal;letter-spacing:-0.3px'>Evaluation</div>
<div class='a' style='left:253px;top:394.5px;width:446px;height:1px;background:#f0f0f0'></div>
<div class='t' style='left:261px;top:379.50px;font-size:13px;color:#000;font-weight:bold;'>9.Lf3</div>
<div class='t' style='left:337.5px;top:379.50px;font-size:13px;color:#111;font-weight:normal;'>13</div>
<div class='t' style='left:380px;width:45px;text-align:right;top:379.50px;font-size:13px;color:#111'>77%</div>
<div class='t' style='left:457.5px;top:379.50px;font-size:13px;color:#111;font-weight:normal;'>2437</div>
<div class='t' style='left:507.5px;top:379.50px;font-size:13px;color:#111;font-weight:normal;'>2015-Dez-9</div>
<div class='t' style='left:592.5px;top:379.50px;font-size:13px;color:#111;font-weight:normal;'>=</div>
<div class='t' style='left:672px;top:379.50px;font-size:13px;color:#111;font-weight:normal;'>496</div>
<div class='a' style='left:253px;top:413.5px;width:446px;height:1px;background:#f0f0f0'></div>
<div class='t' style='left:261px;top:398.50px;font-size:13px;color:#000;font-weight:bold;'>9.Te1</div>
<div class='t' style='left:337.5px;top:398.50px;font-size:13px;color:#111;font-weight:normal;'>5</div>
<div class='t' style='left:380px;width:45px;text-align:right;top:398.50px;font-size:13px;color:#111'>70%</div>
<div class='t' style='left:457.5px;top:398.50px;font-size:13px;color:#111;font-weight:normal;'>2381</div>
<div class='t' style='left:507.5px;top:398.50px;font-size:13px;color:#111;font-weight:normal;'>2016-Sep-17</div>
<div class='t' style='left:592.5px;top:398.50px;font-size:13px;color:#111;font-weight:normal;'>=</div>
<div class='t' style='left:672px;top:398.50px;font-size:13px;color:#111;font-weight:normal;'>501</div>
<div class='a' style='left:253px;top:415.0px;width:446px;height:19px;background:#3399ff;border:1px dotted #222'></div>
<div class='t' style='left:261px;top:417.50px;font-size:13px;color:#000;font-weight:bold;'>9.c3</div>
<div class='t' style='left:337.5px;top:417.50px;font-size:13px;color:#fff;font-weight:normal;'>4</div>
<div class='t' style='left:380px;width:45px;text-align:right;top:417.50px;font-size:13px;color:#fff'>88%</div>
<div class='t' style='left:457.5px;top:417.50px;font-size:13px;color:#fff;font-weight:normal;'>2544</div>
<div class='t' style='left:507.5px;top:417.50px;font-size:13px;color:#fff;font-weight:normal;'>2016-Aug-12</div>
<div class='t' style='left:592.5px;top:417.50px;font-size:13px;color:#fff;font-weight:normal;'>±</div>
<div class='t' style='left:672px;top:417.50px;font-size:13px;color:#fff;font-weight:normal;'>842</div>
<div class='a' style='left:253px;top:451.5px;width:446px;height:1px;background:#f0f0f0'></div>
<div class='t' style='left:261px;top:436.50px;font-size:13px;color:#000;font-weight:bold;'>9.f4</div>
<div class='t' style='left:337.5px;top:436.50px;font-size:13px;color:#111;font-weight:normal;'>3</div>
<div class='t' style='left:380px;width:45px;text-align:right;top:436.50px;font-size:13px;color:#111'>0%</div>
<div class='t' style='left:457.5px;top:436.50px;font-size:13px;color:#111;font-weight:normal;'>2314</div>
<div class='t' style='left:507.5px;top:436.50px;font-size:13px;color:#111;font-weight:normal;'>2006</div>
<svg class='a' style='left:591px;top:437.5px' width='10' height='11'><path d='M1,2 H9 M1,5 H9 M5,5 V10.5 M1,8 H9' stroke='#111' stroke-width='1.2'/></svg>
<div class='t' style='left:672px;top:436.50px;font-size:13px;color:#111;font-weight:normal;'>239</div>
<div class='a' style='left:253px;top:470.5px;width:446px;height:1px;background:#f0f0f0'></div>
<div class='t' style='left:261px;top:455.50px;font-size:13px;color:#000;font-weight:normal;'>9.Dd3</div>
<div class='t' style='left:337.5px;top:455.50px;font-size:13px;color:#111;font-weight:normal;'>2</div>
<div class='t' style='left:380px;width:45px;text-align:right;top:455.50px;font-size:13px;color:#111'>0%</div>
<div class='t' style='left:457.5px;top:455.50px;font-size:13px;color:#111;font-weight:normal;'>2257</div>
<div class='t' style='left:507.5px;top:455.50px;font-size:13px;color:#111;font-weight:normal;'>2013</div>
<div class='t' style='left:592.5px;top:455.50px;font-size:13px;color:#111;font-weight:normal;'>---</div>
<div class='t' style='left:672px;top:455.50px;font-size:13px;color:#111;font-weight:normal;'>45</div>
<div class='a' style='left:670px;top:352px;width:29px;height:23px;overflow:hidden'><div class='t' style='left:3.9px;top:7px;font-size:12px;color:#1e1e1e;letter-spacing:-0.3px'>Visits</div></div>
<div class='a' style='left:699px;top:352px;width:17px;height:119px;background:#f0f0f0'></div>
<svg class='a' style='left:703px;top:360px' width='9' height='5'><path d='M0.5,4.5 L4.5,0.5 L8.5,4.5 Z' fill='#444'/></svg>
<div class='a' style='left:700px;top:372px;width:15px;height:26px;border:1px solid #9a9a9a;border-radius:2px;background:linear-gradient(90deg,#f4f4f4,#e2e2e2)'></div>
<div class='a' style='left:704px;top:381px;width:7px;height:1px;background:#555'></div>
<div class='a' style='left:704px;top:384px;width:7px;height:1px;background:#555'></div>
<div class='a' style='left:704px;top:387px;width:7px;height:1px;background:#555'></div>
<svg class='a' style='left:703px;top:459px' width='9' height='5'><path d='M0.5,0.5 L4.5,4.5 L8.5,0.5 Z' fill='#444'/></svg>
<div class='a' style='left:716px;top:352px;width:5px;height:135px;background:#e4e4e4;border-left:1px solid #c8c8c8;border-right:1px solid #707070'></div>
<div class='a' style='left:253px;top:471px;width:463px;height:16px;background:#f0f0f0'></div>
<svg class='a' style='left:258px;top:475px' width='5' height='9'><path d='M5,0 L0,4.5 L5,9 Z' fill='#555'/></svg>
<div class='a' style='left:272px;top:471.5px;width:342px;height:15px;border:1px solid #9a9a9a;border-radius:2px;background:linear-gradient(#f6f6f6,#e0e0e0)'></div>
<div class='a' style='left:439px;top:475px;width:1px;height:7px;background:#555'></div>
<div class='a' style='left:442px;top:475px;width:1px;height:7px;background:#555'></div>
<div class='a' style='left:445px;top:475px;width:1px;height:7px;background:#555'></div>
<svg class='a' style='left:689px;top:475px' width='5' height='9'><path d='M0,0 L5,4.5 L0,9 Z' fill='#555'/></svg>
<div class='a' style='left:726px;top:10px;width:1px;height:477px;background:#9a9a9a'></div>
<div class='tb' style='left:727px;top:10px;width:320px;height:19px'></div>
<div class='t' style='left:731.3px;top:13.64px;font-size:12px;color:#4f5059;font-weight:normal;letter-spacing:-0.33px'>Online Database</div>
<svg class='a' style='left:1018.7px;top:17.6px' width='10' height='6'><path d='M0,0 H9.4 L4.7,5.4 Z' fill='#000'/></svg>
<svg class='a' style='left:1035.5px;top:15.8px' width='9' height='8'><path d='M0.8,0.6 L8.2,6.6 M8.2,0.6 L0.8,6.6' stroke='#000' stroke-width='2'/></svg>
<div class='a' style='left:727px;top:29px;width:320px;height:26px;background:linear-gradient(#fff,#fff 30%,#f0f0f0 35%,#f0f0f0)'></div>
<div class='a' style='left:811px;top:31px;width:158px;height:20px;background:#fff;border-top:1px solid #dfe6ee;border-right:1px solid #dfe6ee'></div>
<div class='a' style='left:730px;top:33px;width:97px;height:20px;border:1px solid #707070;border-radius:3px;background:linear-gradient(#f2f2f2,#ebebeb 50%,#dddddd 51%,#cfcfcf)'></div>
<div class='t' style='left:743.5px;top:36.84px;font-size:12px;color:#000;font-weight:normal;letter-spacing:-0.6px'>Restore Game</div>
<div class='t' style='left:843.5px;top:35.15px;font-size:14px;color:#111;font-weight:normal;font-family:"Liberation Serif",serif;font-style:italic'>27 Games found</div>
<div class='a' style='left:727px;top:54px;width:320px;height:1px;background:#d0d0d0'></div>
<div class='a' style='left:727px;top:55px;width:320px;height:178px;background:#fff'></div>
<div class='a' style='left:727px;top:56px;width:320px;height:23px;background:linear-gradient(#fff 0,#fff 45%,#f3f3f4 46%,#f1f2f3);border-bottom:1px solid #d5d5d5'></div>
<div class='a' style='left:815.5px;top:58px;width:1px;height:20px;background:#e0e0e0'></div>
<div class='a' style='left:872px;top:58px;width:1px;height:20px;background:#e0e0e0'></div>
<div class='a' style='left:927.7px;top:58px;width:1px;height:20px;background:#e0e0e0'></div>
<div class='a' style='left:983.3px;top:58px;width:1px;height:20px;background:#e0e0e0'></div>
<div class='t' style='left:733.6px;top:63.34px;font-size:12px;color:#1e1e1e;font-weight:normal;letter-spacing:-0.2px'>Moves</div>
<div class='t' style='left:823px;top:63.34px;font-size:12px;color:#1e1e1e;font-weight:normal;letter-spacing:-0.5px'>Games</div>
<div class='t' style='left:879.3px;top:63.34px;font-size:12px;color:#1e1e1e;font-weight:normal;letter-spacing:-0.2px'>Trans...</div>
<div class='t' style='left:934.9px;top:63.34px;font-size:12px;color:#1e1e1e;font-weight:normal;letter-spacing:-0.2px'>Score</div>
<div class='t' style='left:990.4px;top:63.34px;font-size:12px;color:#1e1e1e;font-weight:normal;letter-spacing:-0.2px'>Last pla...</div>
<div class='t' style='left:735px;top:84.04px;font-size:12px;color:#000;font-weight:bold;letter-spacing:0.2px'>9.Be2-f3</div>
<div class='t' style='left:821.5px;top:84.04px;font-size:12px;color:#000;font-weight:normal;letter-spacing:-0.5px'>10</div>
<div class='t' style='left:877.7px;top:84.04px;font-size:12px;color:#000;font-weight:normal;letter-spacing:-0.5px'>15</div>
<div class='t' style='left:933.3px;top:84.04px;font-size:12px;color:#000;font-weight:normal;letter-spacing:-0.5px'>66.0%</div>
<div class='t' style='left:988px;top:84.04px;font-size:12px;color:#000;font-weight:normal;letter-spacing:-0.5px'>2014</div>
<div class='a' style='left:727px;top:97.5px;width:322px;height:17px;border:1px dotted #222'></div>
<div class='t' style='left:735px;top:101.04px;font-size:12px;color:#000;font-weight:bold;letter-spacing:0.2px'>9.c2-c3</div>
<div class='t' style='left:821.5px;top:101.04px;font-size:12px;color:#000;font-weight:normal;letter-spacing:-0.5px'>6</div>
<div class='t' style='left:877.7px;top:101.04px;font-size:12px;color:#000;font-weight:normal;letter-spacing:-0.5px'>0</div>
<div class='t' style='left:933.3px;top:101.04px;font-size:12px;color:#000;font-weight:normal;letter-spacing:-0.5px'>91.7%</div>
<div class='t' style='left:988px;top:101.04px;font-size:12px;color:#000;font-weight:normal;letter-spacing:-0.5px'>2016</div>
<div class='a' style='left:727px;top:130.5px;width:320px;height:1px;background:#efefef'></div>
<div class='t' style='left:735px;top:118.04px;font-size:12px;color:#000;font-weight:bold;letter-spacing:0.2px'>9.Rf1-e1</div>
<div class='t' style='left:821.5px;top:118.04px;font-size:12px;color:#000;font-weight:normal;letter-spacing:-0.5px'>5</div>
<div class='t' style='left:877.7px;top:118.04px;font-size:12px;color:#000;font-weight:normal;letter-spacing:-0.5px'>8</div>
<div class='t' style='left:933.3px;top:118.04px;font-size:12px;color:#000;font-weight:normal;letter-spacing:-0.5px'>73.1%</div>
<div class='t' style='left:988px;top:118.04px;font-size:12px;color:#000;font-weight:normal;letter-spacing:-0.5px'>2016</div>
<div class='a' style='left:727px;top:147.5px;width:320px;height:1px;background:#efefef'></div>
<div class='t' style='left:735px;top:135.04px;font-size:12px;color:#000;font-weight:bold;letter-spacing:0.2px'>9.Qd1-d3</div>
<div class='t' style='left:821.5px;top:135.04px;font-size:12px;color:#000;font-weight:normal;letter-spacing:-0.5px'>2</div>
<div class='t' style='left:877.7px;top:135.04px;font-size:12px;color:#000;font-weight:normal;letter-spacing:-0.5px'>2</div>
<div class='t' style='left:933.3px;top:135.04px;font-size:12px;color:#000;font-weight:normal;letter-spacing:-0.5px'>25.0%</div>
<div class='t' style='left:988px;top:135.04px;font-size:12px;color:#000;font-weight:normal;letter-spacing:-0.5px'>2013</div>
<div class='a' style='left:727px;top:164.5px;width:320px;height:1px;background:#efefef'></div>
<div class='t' style='left:735px;top:152.04px;font-size:12px;color:#000;font-weight:bold;letter-spacing:0.2px'>9.f2-f4</div>
<div class='t' style='left:821.5px;top:152.04px;font-size:12px;color:#000;font-weight:normal;letter-spacing:-0.5px'>1</div>
<div class='t' style='left:877.7px;top:152.04px;font-size:12px;color:#000;font-weight:normal;letter-spacing:-0.5px'>9</div>
<div class='t' style='left:933.3px;top:152.04px;font-size:12px;color:#000;font-weight:normal;letter-spacing:-0.5px'>20.0%</div>
<div class='t' style='left:988px;top:152.04px;font-size:12px;color:#000;font-weight:normal;letter-spacing:-0.5px'>2011</div>
<div class='a' style='left:727px;top:181.5px;width:320px;height:1px;background:#efefef'></div>
<div class='t' style='left:735px;top:169.04px;font-size:12px;color:#000;font-weight:bold;letter-spacing:0.2px'>9.Bc1-e3</div>
<div class='t' style='left:821.5px;top:169.04px;font-size:12px;color:#000;font-weight:normal;letter-spacing:-0.5px'>1</div>
<div class='t' style='left:877.7px;top:169.04px;font-size:12px;color:#000;font-weight:normal;letter-spacing:-0.5px'>4</div>
<div class='t' style='left:933.3px;top:169.04px;font-size:12px;color:#000;font-weight:normal;letter-spacing:-0.5px'>80.0%</div>
<div class='t' style='left:988px;top:169.04px;font-size:12px;color:#000;font-weight:normal;letter-spacing:-0.5px'>2014</div>
<div class='a' style='left:727px;top:198.5px;width:320px;height:1px;background:#efefef'></div>
<div class='t' style='left:735px;top:186.04px;font-size:12px;color:#000;font-weight:bold;letter-spacing:0.2px'>9.f2-f3</div>
<div class='t' style='left:821.5px;top:186.04px;font-size:12px;color:#000;font-weight:normal;letter-spacing:-0.5px'>1</div>
<div class='t' style='left:877.7px;top:186.04px;font-size:12px;color:#000;font-weight:normal;letter-spacing:-0.5px'>0</div>
<div class='t' style='left:933.3px;top:186.04px;font-size:12px;color:#000;font-weight:normal;letter-spacing:-0.5px'>0.0%</div>
<div class='t' style='left:988px;top:186.04px;font-size:12px;color:#000;font-weight:normal;letter-spacing:-0.5px'>2001</div>
<div class='a' style='left:727px;top:215.5px;width:320px;height:1px;background:#efefef'></div>
<div class='t' style='left:735px;top:203.04px;font-size:12px;color:#000;font-weight:bold;letter-spacing:0.2px'>9.Be2-d3</div>
<div class='t' style='left:821.5px;top:203.04px;font-size:12px;color:#000;font-weight:normal;letter-spacing:-0.5px'>1</div>
<div class='t' style='left:877.7px;top:203.04px;font-size:12px;color:#000;font-weight:normal;letter-spacing:-0.5px'>0</div>
<div class='t' style='left:933.3px;top:203.04px;font-size:12px;color:#000;font-weight:normal;letter-spacing:-0.5px'>0.0%</div>
<div class='t' style='left:988px;top:203.04px;font-size:12px;color:#000;font-weight:normal;letter-spacing:-0.5px'>2011</div>
<div class='a' style='left:727px;top:229px;width:320px;height:4px;background:#f0f0f0'></div>
<div class='a' style='left:850px;top:230px;width:2px;height:2px;background:#c0c0c0'></div>
<div class='a' style='left:854px;top:230px;width:2px;height:2px;background:#c0c0c0'></div>
<div class='a' style='left:858px;top:230px;width:2px;height:2px;background:#c0c0c0'></div>
<div class='a' style='left:862px;top:230px;width:2px;height:2px;background:#c0c0c0'></div>
<div class='a' style='left:866px;top:230px;width:2px;height:2px;background:#c0c0c0'></div>
<div class='a' style='left:870px;top:230px;width:2px;height:2px;background:#c0c0c0'></div>
<div class='a' style='left:874px;top:230px;width:2px;height:2px;background:#c0c0c0'></div>
<div class='a' style='left:878px;top:230px;width:2px;height:2px;background:#c0c0c0'></div>
<div class='a' style='left:882px;top:230px;width:2px;height:2px;background:#c0c0c0'></div>
<div class='a' style='left:886px;top:230px;width:2px;height:2px;background:#c0c0c0'></div>
<div class='a' style='left:890px;top:230px;width:2px;height:2px;background:#c0c0c0'></div>
<div class='a' style='left:894px;top:230px;width:2px;height:2px;background:#c0c0c0'></div>
<div class='a' style='left:898px;top:230px;width:2px;height:2px;background:#c0c0c0'></div>
<div class='a' style='left:902px;top:230px;width:2px;height:2px;background:#c0c0c0'></div>
<div class='a' style='left:906px;top:230px;width:2px;height:2px;background:#c0c0c0'></div>
<div class='a' style='left:910px;top:230px;width:2px;height:2px;background:#c0c0c0'></div>
<div class='a' style='left:914px;top:230px;width:2px;height:2px;background:#c0c0c0'></div>
<div class='a' style='left:727px;top:233px;width:320px;height:1px;background:#7a7a7a'></div>
<div class='a' style='left:727px;top:234px;width:308px;height:236px;background:#fff'></div>
<div class='a' style='left:727px;top:235px;width:308px;height:21px;background:linear-gradient(#fff 0,#fff 45%,#f3f3f4 46%,#f1f2f3);border-bottom:1px solid #d5d5d5'></div>
<div class='a' style='left:825px;top:237px;width:1px;height:19px;background:#e0e0e0'></div>
<div class='a' style='left:867.3px;top:237px;width:1px;height:19px;background:#e0e0e0'></div>
<div class='a' style='left:966.5px;top:237px;width:1px;height:19px;background:#e0e0e0'></div>
<div class='a' style='left:1007.8px;top:237px;width:1px;height:19px;background:#e0e0e0'></div>
<div class='t' style='left:733px;top:239.84px;font-size:12px;color:#1e1e1e;font-weight:normal;letter-spacing:-0.2px'>White</div>
<div class='t' style='left:832.3px;top:239.84px;font-size:12px;color:#1e1e1e;font-weight:normal;letter-spacing:-0.2px'>Elo W</div>
<div class='t' style='left:874.3px;top:239.84px;font-size:12px;color:#1e1e1e;font-weight:normal;letter-spacing:-0.2px'>Black</div>
<div class='t' style='left:973.5px;top:239.84px;font-size:12px;color:#1e1e1e;font-weight:normal;letter-spacing:-0.2px'>Elo B</div>
<div class='t' style='left:1015.2px;top:239.84px;font-size:12px;color:#1e1e1e;font-weight:normal;letter-spacing:-0.2px'>Res</div>
<div class='a' style='left:727px;top:234px;width:308px;height:236px;overflow:hidden'><div class='a' style='left:0;top:40px;width:308px;height:1px;background:#efefef'></div><div class='t' style='left:8.5px;top:26.64px;font-size:12px;font-weight:bold;letter-spacing:-0.2px;color:#000'>Efimenko,Z</div><div class='t' style='left:98.79999999999995px;top:26.64px;font-size:12px;font-weight:normal;letter-spacing:-0.8px;color:#000'>2624</div><div class='t' style='left:145.29999999999995px;top:26.64px;font-size:12px;font-weight:bold;letter-spacing:-0.3px;color:#000'>Volokitin,A</div><div class='t' style='left:239.5px;top:26.64px;font-size:12px;font-weight:normal;letter-spacing:-0.8px;color:#000'>2681</div><div class='t' style='left:286.29999999999995px;top:26.64px;font-size:12px;font-weight:bold;letter-spacing:0px;color:#000'>½-½</div><div class='a' style='left:0;top:57px;width:308px;height:1px;background:#efefef'></div><div class='t' style='left:8.5px;top:43.64px;font-size:12px;font-weight:bold;letter-spacing:-0.2px;color:#000'>Oparin,G</div><div class='t' style='left:98.79999999999995px;top:43.64px;font-size:12px;font-weight:normal;letter-spacing:-0.8px;color:#000'>2488</div><div class='t' style='left:145.29999999999995px;top:43.64px;font-size:12px;font-weight:bold;letter-spacing:-0.3px;color:#000'>Van Kampen,R</div><div class='t' style='left:239.5px;top:43.64px;font-size:12px;font-weight:normal;letter-spacing:-0.8px;color:#000'>2565</div><div class='t' style='left:286.29999999999995px;top:43.64px;font-size:12px;font-weight:bold;letter-spacing:0px;color:#000'>1-0</div><div class='a' style='left:0;top:74px;width:308px;height:1px;background:#efefef'></div><div class='t' style='left:8.5px;top:60.64px;font-size:12px;font-weight:bold;letter-spacing:-0.2px;color:#000'>Asrian,K</div><div class='t' style='left:98.79999999999995px;top:60.64px;font-size:12px;font-weight:normal;letter-spacing:-0.8px;color:#000'>2597</div><div class='t' style='left:145.29999999999995px;top:60.64px;font-size:12px;font-weight:bold;letter-spacing:-0.3px;color:#000'>Agrest,E</div><div class='t' style='left:239.5px;top:60.64px;font-size:12px;font-weight:normal;letter-spacing:-0.8px;color:#000'>2607</div><div class='t' style='left:286.29999999999995px;top:60.64px;font-size:12px;font-weight:bold;letter-spacing:0px;color:#000'>½-½</div><div class='a' style='left:0;top:91px;width:308px;height:1px;background:#efefef'></div><div class='t' style='left:8.5px;top:77.64px;font-size:12px;font-weight:bold;letter-spacing:-0.2px;color:#000'>Kasparov,G</div><div class='t' style='left:98.79999999999995px;top:77.64px;font-size:12px;font-weight:normal;letter-spacing:-0.8px;color:#000'>2825</div><div class='t' style='left:145.29999999999995px;top:77.64px;font-size:12px;font-weight:bold;letter-spacing:-0.3px;color:#000'>Topalov,V</div><div class='t' style='left:239.5px;top:77.64px;font-size:12px;font-weight:normal;letter-spacing:-0.8px;color:#000'>2740</div><div class='t' style='left:286.29999999999995px;top:77.64px;font-size:12px;font-weight:bold;letter-spacing:0px;color:#000'>1-0</div><div class='a' style='left:0;top:108px;width:308px;height:1px;background:#efefef'></div><div class='t' style='left:8.5px;top:94.64px;font-size:12px;font-weight:bold;letter-spacing:-0.2px;color:#000'>Petrov,M</div><div class='t' style='left:98.79999999999995px;top:94.64px;font-size:12px;font-weight:normal;letter-spacing:-0.8px;color:#000'>2449</div><div class='t' style='left:145.29999999999995px;top:94.64px;font-size:12px;font-weight:bold;letter-spacing:-0.3px;color:#000'>Bojkovic,S</div><div class='t' style='left:239.5px;top:94.64px;font-size:12px;font-weight:normal;letter-spacing:-0.8px;color:#000'>2233</div><div class='t' style='left:286.29999999999995px;top:94.64px;font-size:12px;font-weight:bold;letter-spacing:0px;color:#000'>1-0</div><div class='a' style='left:0;top:125px;width:308px;height:1px;background:#efefef'></div><div class='t' style='left:8.5px;top:111.64px;font-size:12px;font-weight:bold;letter-spacing:-0.2px;color:#000'>Perez Garcia,R</div><div class='t' style='left:98.79999999999995px;top:111.64px;font-size:12px;font-weight:normal;letter-spacing:-0.8px;color:#000'>2315</div><div class='t' style='left:145.29999999999995px;top:111.64px;font-size:12px;font-weight:bold;letter-spacing:-0.3px;color:#000'>Morales Garcia..</div><div class='t' style='left:239.5px;top:111.64px;font-size:12px;font-weight:normal;letter-spacing:-0.8px;color:#000'>2259</div><div class='t' style='left:286.29999999999995px;top:111.64px;font-size:12px;font-weight:bold;letter-spacing:0px;color:#000'>1-0</div><div class='a' style='left:0;top:142px;width:308px;height:1px;background:#efefef'></div><div class='t' style='left:8.5px;top:128.64px;font-size:12px;font-weight:bold;letter-spacing:-0.2px;color:#000'>Wieczorek,O</div><div class='t' style='left:98.79999999999995px;top:128.64px;font-size:12px;font-weight:normal;letter-spacing:-0.8px;color:#000'>2374</div><div class='t' style='left:145.29999999999995px;top:128.64px;font-size:12px;font-weight:bold;letter-spacing:-0.3px;color:#000'>Kanovsky,D</div><div class='t' style='left:239.5px;top:128.64px;font-size:12px;font-weight:normal;letter-spacing:-0.8px;color:#000'>2478</div><div class='t' style='left:286.29999999999995px;top:128.64px;font-size:12px;font-weight:bold;letter-spacing:0px;color:#000'>0-1</div><div class='a' style='left:0;top:159px;width:308px;height:1px;background:#efefef'></div><div class='t' style='left:8.5px;top:145.64px;font-size:12px;font-weight:bold;letter-spacing:-0.2px;color:#000'>Brenjo,S</div><div class='t' style='left:98.79999999999995px;top:145.64px;font-size:12px;font-weight:normal;letter-spacing:-0.8px;color:#000'>2505</div><div class='t' style='left:145.29999999999995px;top:145.64px;font-size:12px;font-weight:bold;letter-spacing:-0.3px;color:#000'>Zivkovic,V</div><div class='t' style='left:239.5px;top:145.64px;font-size:12px;font-weight:normal;letter-spacing:-0.8px;color:#000'>2429</div><div class='t' style='left:286.29999999999995px;top:145.64px;font-size:12px;font-weight:bold;letter-spacing:0px;color:#000'>1-0</div><div class='a' style='left:0;top:176px;width:308px;height:1px;background:#efefef'></div><div class='t' style='left:8.5px;top:162.64px;font-size:12px;font-weight:bold;letter-spacing:-0.2px;color:#000'>Xu,Y</div><div class='t' style='left:98.79999999999995px;top:162.64px;font-size:12px;font-weight:normal;letter-spacing:-0.8px;color:#000'>2478</div><div class='t' style='left:145.29999999999995px;top:162.64px;font-size:12px;font-weight:bold;letter-spacing:-0.3px;color:#000'>Koneru,H</div><div class='t' style='left:239.5px;top:162.64px;font-size:12px;font-weight:normal;letter-spacing:-0.8px;color:#000'>2508</div><div class='t' style='left:286.29999999999995px;top:162.64px;font-size:12px;font-weight:bold;letter-spacing:0px;color:#000'>½-½</div><div class='a' style='left:0;top:193px;width:308px;height:1px;background:#efefef'></div><div class='t' style='left:8.5px;top:179.64px;font-size:12px;font-weight:bold;letter-spacing:-0.2px;color:#000'>Munguntuul,B</div><div class='t' style='left:98.79999999999995px;top:179.64px;font-size:12px;font-weight:normal;letter-spacing:-0.8px;color:#000'>2261</div><div class='t' style='left:145.29999999999995px;top:179.64px;font-size:12px;font-weight:bold;letter-spacing:-0.3px;color:#000'>Koneru,H</div><div class='t' style='left:239.5px;top:179.64px;font-size:12px;font-weight:normal;letter-spacing:-0.8px;color:#000'>2622</div><div class='t' style='left:286.29999999999995px;top:179.64px;font-size:12px;font-weight:bold;letter-spacing:0px;color:#000'>1-0</div><div class='a' style='left:0;top:210px;width:308px;height:1px;background:#efefef'></div><div class='t' style='left:8.5px;top:196.64px;font-size:12px;font-weight:bold;letter-spacing:-0.2px;color:#000'>Brenjo,S</div><div class='t' style='left:98.79999999999995px;top:196.64px;font-size:12px;font-weight:normal;letter-spacing:-0.8px;color:#000'>2484</div><div class='t' style='left:145.29999999999995px;top:196.64px;font-size:12px;font-weight:bold;letter-spacing:-0.3px;color:#000'>Zivkovic,V</div><div class='t' style='left:239.5px;top:196.64px;font-size:12px;font-weight:normal;letter-spacing:-0.8px;color:#000'>2407</div><div class='t' style='left:286.29999999999995px;top:196.64px;font-size:12px;font-weight:bold;letter-spacing:0px;color:#000'>1-0</div><div class='a' style='left:0;top:227px;width:308px;height:1px;background:#efefef'></div><div class='t' style='left:8.5px;top:213.64px;font-size:12px;font-weight:bold;letter-spacing:-0.2px;color:#000'>Puranik,A</div><div class='t' style='left:98.79999999999995px;top:213.64px;font-size:12px;font-weight:normal;letter-spacing:-0.8px;color:#000'>2257</div><div class='t' style='left:145.29999999999995px;top:213.64px;font-size:12px;font-weight:bold;letter-spacing:-0.3px;color:#000'>Karthikeyan,M</div><div class='t' style='left:239.5px;top:213.64px;font-size:12px;font-weight:normal;letter-spacing:-0.8px;color:#000'>2444</div><div class='t' style='left:286.29999999999995px;top:213.64px;font-size:12px;font-weight:bold;letter-spacing:0px;color:#000'>0-1</div><div class='a' style='left:0;top:244px;width:308px;height:1px;background:#efefef'></div><div class='t' style='left:8.5px;top:230.64px;font-size:12px;font-weight:bold;letter-spacing:-0.2px;color:#000'>Situru,N</div><div class='t' style='left:98.79999999999995px;top:230.64px;font-size:12px;font-weight:normal;letter-spacing:-0.8px;color:#000'>2382</div><div class='t' style='left:145.29999999999995px;top:230.64px;font-size:12px;font-weight:bold;letter-spacing:-0.3px;color:#000'>Koneru,H</div><div class='t' style='left:239.5px;top:230.64px;font-size:12px;font-weight:normal;letter-spacing:-0.8px;color:#000'>2521</div><div class='t' style='left:286.29999999999995px;top:230.64px;font-size:12px;font-weight:bold;letter-spacing:0px;color:#000'>1-0</div></div>
<div class='a' style='left:1035px;top:234px;width:12px;height:236px;background:#f0f0f0'></div>
<svg class='a' style='left:1038px;top:240px' width='9' height='5'><path d='M0.5,4.5 L4.5,0.5 L8.5,4.5 Z' fill='#444'/></svg>
<div class='a' style='left:1036px;top:253px;width:13px;height:85px;border:1px solid #9a9a9a;border-radius:2px;background:linear-gradient(90deg,#f4f4f4,#e2e2e2)'></div>
<div class='a' style='left:1040px;top:292px;width:7px;height:1px;background:#555'></div>
<div class='a' style='left:1040px;top:295px;width:7px;height:1px;background:#555'></div>
<div class='a' style='left:1040px;top:298px;width:7px;height:1px;background:#555'></div>
<svg class='a' style='left:1038px;top:459px' width='9' height='5'><path d='M0.5,0.5 L4.5,4.5 L8.5,0.5 Z' fill='#444'/></svg>
<div class='a' style='left:727px;top:470px;width:320px;height:17px;background:#f0f0f0'></div>
<svg class='a' style='left:732px;top:474px' width='5' height='9'><path d='M5,0 L0,4.5 L5,9 Z' fill='#555'/></svg>
<div class='a' style='left:745px;top:471px;width:102px;height:15px;border:1px solid #9a9a9a;border-radius:2px;background:linear-gradient(#f6f6f6,#e0e0e0)'></div>
<div class='a' style='left:792px;top:475px;width:1px;height:7px;background:#555'></div>
<div class='a' style='left:795px;top:475px;width:1px;height:7px;background:#555'></div>
<div class='a' style='left:798px;top:475px;width:1px;height:7px;background:#555'></div>
<svg class='a' style='left:1024px;top:474px' width='5' height='9'><path d='M0,0 L5,4.5 L0,9 Z' fill='#555'/></svg>
<div class='a' style='left:0;top:487px;width:1047px;height:16px;background:#f0f0f0;border-top:1px solid #dadada'></div>
<div class='a' style='left:806px;top:493px;width:224px;height:12px;background:#d4d4f0;border:1px solid #6a6a6a'></div>
<div class='a' style='left:847px;top:497.5px;width:133px;height:8px;background:#1fa51f'></div>
<div class='t' style='left:809.5px;top:494.84px;font-size:12px;color:#111;font-weight:normal;letter-spacing:-0.5px'>100%</div>
</body></html>
